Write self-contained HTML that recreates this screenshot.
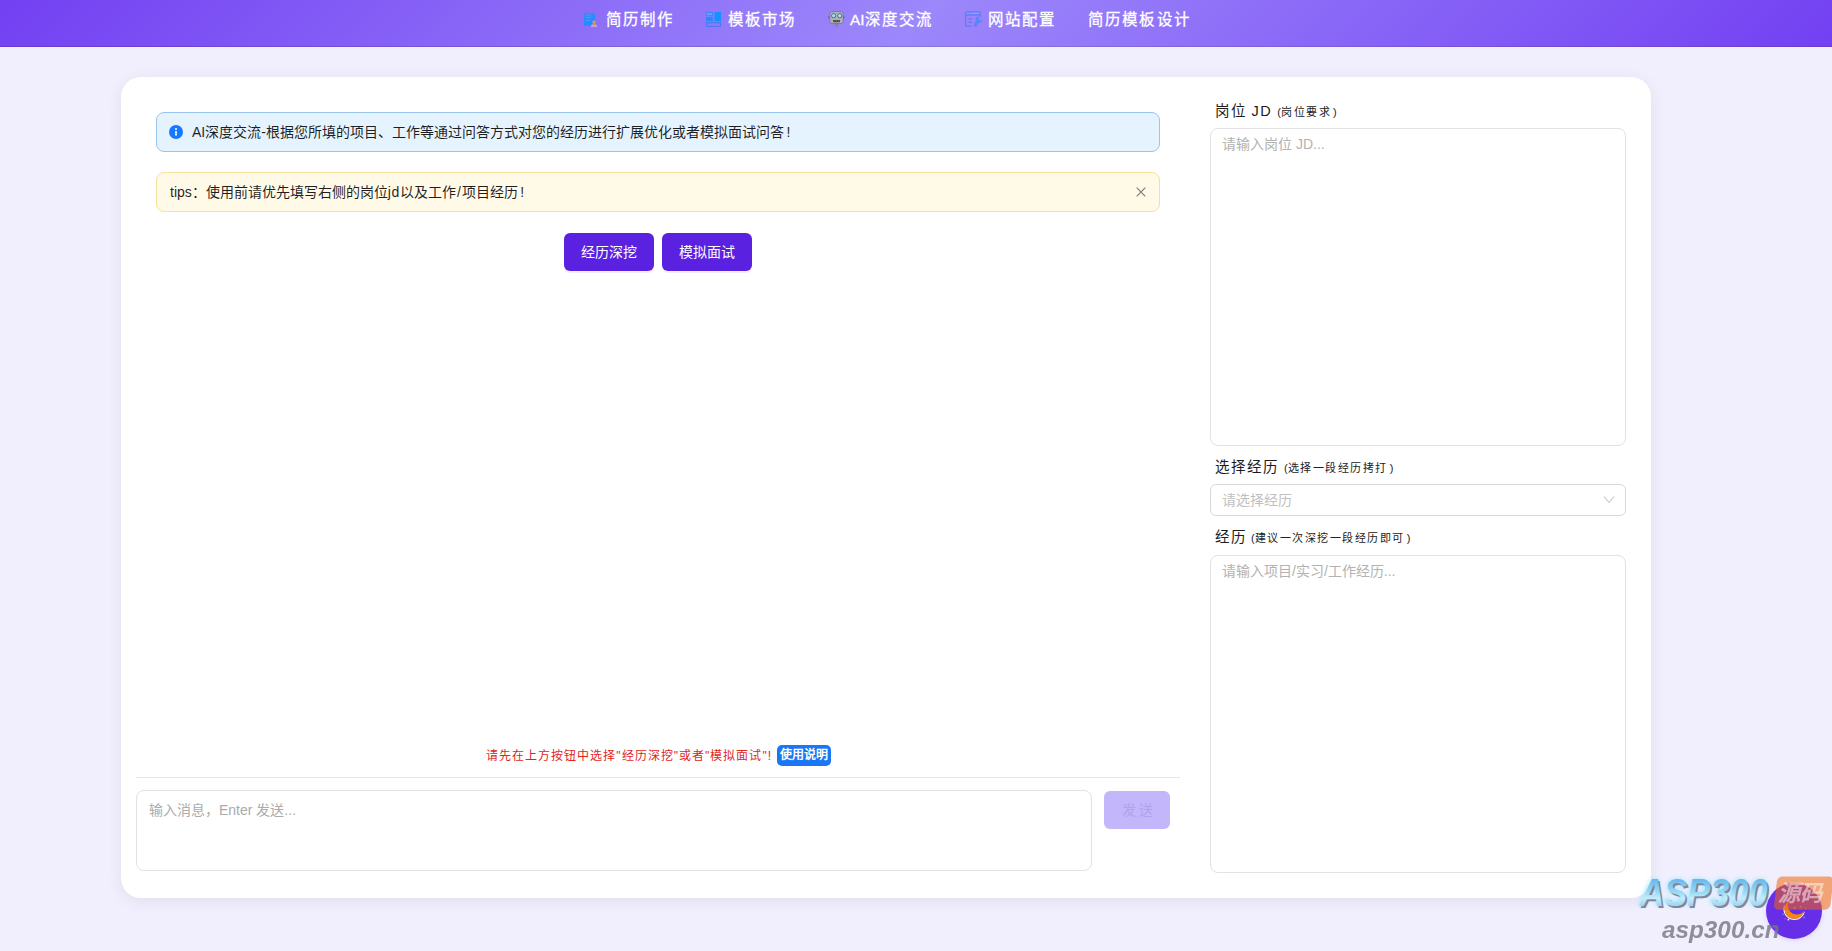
<!DOCTYPE html>
<html lang="zh-CN">
<head>
<meta charset="utf-8">
<title>AI深度交流</title>
<style>
*{box-sizing:border-box;margin:0;padding:0}
html,body{width:1832px;height:951px;overflow:hidden}
body{position:relative;background:#f1effd;font-family:"Liberation Sans",sans-serif;font-size:14px;color:rgba(0,0,0,.88)}
.abs{position:absolute}
/* header */
#hdr{position:absolute;left:0;top:0;width:1832px;height:47px;background:linear-gradient(135deg,#7340f2 0%,#9c87fb 50%,#7340f2 100%);border-bottom:1px solid rgba(0,0,0,.13)}
#hdrline{position:absolute;left:0;top:47px;width:1832px;height:1px;background:#fdeeff}
.nav{position:absolute;top:1px;height:38px;line-height:38px;font-size:15.4px;letter-spacing:2.3px;color:#fff;font-weight:500;white-space:nowrap;-webkit-text-stroke:.3px #fff}
.ico{position:absolute}
/* card */
#card{position:absolute;left:121px;top:77px;width:1530px;height:821px;background:#fff;border-radius:20px;box-shadow:0 3px 16px rgba(10,10,50,.07)}
.alert{position:absolute;left:156px;width:1004px;height:40px;border-radius:8px;line-height:38px;font-size:14px;white-space:nowrap}
#info{top:112px;background:#e4f3fe;border:1px solid #9ac5f0;padding-left:35px}
#warn{top:172px;background:#fffae8;border:1px solid #f7e19a;padding-left:13px}
.btn{position:absolute;top:233px;width:90px;height:38px;border-radius:6px;background:#5b21e0;color:#fff;font-size:14px;line-height:38px;text-align:center;font-weight:500;box-shadow:0 2px 0 rgba(91,33,224,.08)}
#hint{position:absolute;top:746px;left:486px;height:21px;line-height:21px;font-size:12px;letter-spacing:1.03px;color:#e0261c;white-space:nowrap}
#badge{position:absolute;left:777px;top:745px;width:54px;height:21px;border-radius:5px;background:#1a76f5;color:#fff;font-size:12px;font-weight:700;line-height:21px;text-align:center;white-space:nowrap}
#divider{position:absolute;left:136px;top:777px;width:1044px;height:1px;background:#e6e6e6}
.ta{position:absolute;border:1px solid #e2e2e2;border-radius:8px;background:#fff;color:#b2b2b2;font-size:14px;padding:4px 11px;line-height:22px;white-space:nowrap}
#send{position:absolute;left:1104px;top:791px;width:66px;height:38px;border-radius:6px;background:#c4b6fa;color:#b0a2ec;font-size:14px;line-height:38px;text-align:center;letter-spacing:3px;padding-left:3px}
.lbl{position:absolute;left:1215px;font-size:14.5px;letter-spacing:1.5px;color:#1c1c1c;white-space:nowrap;height:22px;line-height:22px}
.lbl small{font-size:11px;letter-spacing:1.5px;color:#222;margin-left:5px}.lbl small i{font-style:normal;margin-right:-1.2px}.lbl small b{font-weight:400;margin-left:1.8px}
#sel{position:absolute;left:1210px;top:484px;width:416px;height:32px;border:1px solid #d9d9d9;border-radius:6px;color:#bfbfbf;font-size:14px;line-height:30px;padding-left:11px}
</style>
</head>
<body>
<div id="hdr"></div><div id="hdrline"></div>
<div class="nav" style="left:605.5px">简历制作</div>
<div class="nav" style="left:727.5px">模板市场</div>
<div class="nav" style="left:850px"><span style="letter-spacing:0">AI</span>深度交流</div>
<div class="nav" style="left:987.5px">网站配置</div>
<div class="nav" style="left:1087.5px">简历模板设计</div>

<div id="card"></div>
<div class="alert" id="info">AI深度交流-根据您所填的项目、工作等通过问答方式对您的经历进行扩展优化或者模拟面试问答<span style="margin-left:2.5px">!</span></div>
<div class="alert" id="warn">tips：使用前请优先填写右侧的岗位<span style="letter-spacing:.6px">jd</span>以及工作<span style="margin:0 1.2px">/</span>项目经历<span style="margin-left:2px">!</span></div>
<div class="btn" style="left:564px">经历深挖</div>
<div class="btn" style="left:662px">模拟面试</div>

<div id="hint">请先在上方按钮中选择"经历深挖"或者"模拟面试"!</div>
<div id="badge">使用说明</div>
<div id="divider"></div>
<div class="ta" style="left:136px;top:790px;width:956px;height:81px;padding:8px 12px;color:#ababab">输入消息，Enter 发送...</div>
<div id="send">发送</div>

<div class="lbl" style="top:100px">岗位 JD<small><i>(</i>岗位要求<b>)</b></small></div>
<div class="ta" style="left:1210px;top:128px;width:416px;height:318px">请输入岗位 JD...</div>
<div class="lbl" style="top:456px"><span style="letter-spacing:2px">选择经历</span><small><i>(</i>选择一段经历拷打<b>)</b></small></div>
<div id="sel">请选择经历</div>
<div class="lbl" style="top:526px">经历<small><i>(</i>建议一次深挖一段经历即可<b>)</b></small></div>
<div class="ta" style="left:1210px;top:555px;width:416px;height:318px">请输入项目/实习/工作经历...</div>

<!-- nav icons -->
<svg class="ico" style="left:583px;top:11px" width="16" height="17" viewBox="0 0 16 17">
 <defs><linearGradient id="gd" x1="0" y1="0" x2="0" y2="1"><stop offset="0" stop-color="#4682f6"/><stop offset=".45" stop-color="#2a8cfb"/><stop offset="1" stop-color="#1b91ff"/></linearGradient></defs>
 <rect x="1" y="1.800" width="11.200" height="13" rx=".6" fill="url(#gd)"/>
 <rect x="3" y="3.400" width="5" height="1" fill="#5b94ff"/>
 <rect x="3" y="6.100" width="5" height="1" fill="#5b98ff"/>
 <rect x="3" y="9" width="3.400" height="1" fill="#4f9cff"/>
 <path d="M7.800 15.900c0-2 1.300-2.900 3.200-2.900s3.200.9 3.200 2.900z" fill="#cfa2d6" opacity=".9"/>
 <circle cx="11" cy="11.100" r="1.700" fill="#e0935f"/>
 <rect x="9.800" y="12.300" width="2.400" height="1.800" rx=".8" fill="#e2905a"/>
</svg>
<svg class="ico" style="left:705px;top:11px" width="17" height="17" viewBox="0 0 17 17">
 <rect x="1" y="1" width="15" height="9.600" fill="#6c8dff" opacity=".75"/>
 <rect x="1.500" y="1.500" width="6" height="3.200" fill="#6f9dff" stroke="#4a80f4" stroke-width="1"/>
 <rect x="1" y="6.100" width="6.900" height="4.100" fill="#2b88fb"/>
 <rect x="9.400" y="1" width="6.600" height="9.200" fill="#1890ff"/>
 <rect x="1.600" y="11.700" width="13.800" height="3.700" fill="none" stroke="#4a7af2" stroke-width="1.200"/>
</svg>
<svg class="ico" style="left:827px;top:10px" width="18" height="18" viewBox="0 0 18 18">
 <rect x="7.900" y="12.500" width="3" height="4.300" fill="#88888e"/>
 <rect x="1.200" y="6.300" width="1.600" height="2" fill="#6a55c8"/>
 <rect x="16" y="6.300" width="1.600" height="2" fill="#6a55c8"/>
 <rect x="2.800" y="1.600" width="13.400" height="12" rx="2.200" fill="#b1afb6" stroke="#7668bf" stroke-width=".8"/>
 <circle cx="6.600" cy="5.700" r="2.100" fill="#aadff0" stroke="#3f7686" stroke-width="1"/>
 <circle cx="12.700" cy="5.700" r="2.100" fill="#aadff0" stroke="#3f7686" stroke-width="1"/>
 <rect x="6.100" y="9.900" width="6.800" height="2.300" rx=".4" fill="#47474d"/>
 <path d="M7.800 10.300v1.500M9.500 10.300v1.500M11.200 10.300v1.500" stroke="#8a8a90" stroke-width=".5"/>
</svg>
<svg class="ico" style="left:964px;top:10px" width="19" height="18" viewBox="0 0 19 18">
 <path d="M7 16.200H3a1.400 1.400 0 0 1-1.400-1.400V3.200A1.400 1.400 0 0 1 3 1.800h11.800a1.400 1.400 0 0 1 1.400 1.400v3.600" fill="none" stroke="#6878ee" stroke-width="1.300"/>
 <rect x="2.200" y="2.400" width="13.400" height="1.700" fill="#7f8cfa" opacity=".7"/>
 <rect x="2.200" y="4.100" width="13.400" height="1.700" fill="#5f82fa"/>
 <rect x="3.300" y="2.900" width="1" height=".9" fill="#9aa6ff"/><rect x="5" y="2.900" width="1" height=".9" fill="#9aa6ff"/>
 <rect x="7.400" y="2.900" width="7" height=".9" fill="#9aa6ff"/>
 <rect x="4.300" y="8.300" width="3.800" height="1.300" fill="#6878ee"/>
 <rect x="4.300" y="11.700" width="3.800" height="1.300" fill="#6878ee"/>
 <path d="M11.300 15.200L14 11" stroke="#5a86fb" stroke-width="3.300" stroke-linecap="round" fill="none"/>
 <circle cx="14.800" cy="9.800" r="3.300" fill="#5f84f8"/>
 <path d="M14.700 10.300L15.300 6 19 9.300z" fill="#8d8bfc"/>
</svg>
<!-- alert icons -->
<svg class="ico" style="left:169px;top:125px" width="14" height="14" viewBox="0 0 14 14"><circle cx="7" cy="7" r="7" fill="#1677ff"/><rect x="6.200" y="6" width="1.600" height="4.600" fill="#fff"/><circle cx="7" cy="4" r="1" fill="#fff"/></svg>
<svg class="ico" style="left:1136px;top:187px" width="10" height="10" viewBox="0 0 10 10"><path d="M.7.700l8.600 8.600M9.300.700L.700 9.300" stroke="#777" stroke-width="1.100" fill="none"/></svg>
<svg class="ico" style="left:1603px;top:496px" width="12" height="8" viewBox="0 0 12 8"><path d="M1 .5l5 6L11 .5" stroke="#c6c6c6" stroke-width="1.100" fill="none"/></svg>

<!-- moon toggle -->
<div id="moon" style="position:absolute;left:1766px;top:883px;width:56px;height:56px;border-radius:50%;background:#672ee8;box-shadow:0 1px 5px rgba(90,50,220,.16)"></div>
<svg class="ico" style="left:1776px;top:892px" width="36" height="36" viewBox="0 0 36 36">
 <defs><mask id="mk"><rect width="36" height="36" fill="#fff"/><circle cx="20.900" cy="13.500" r="9.100" fill="#000"/></mask>
 <mask id="mk2"><rect width="36" height="36" fill="#fff"/><circle cx="19.800" cy="12.500" r="11.500" fill="#000"/></mask></defs>
 <circle cx="18.300" cy="17.200" r="10.300" fill="none" stroke="#fff" stroke-width="1.100" mask="url(#mk2)" opacity=".95"/>
 <circle cx="18.300" cy="17.200" r="9.900" fill="#f5870f" mask="url(#mk)"/>
 <circle cx="7.100" cy="22.300" r="1" fill="#4f7dff"/><circle cx="28.300" cy="25.500" r="1.100" fill="#4f7dff"/>
 <circle cx="12.400" cy="27.600" r=".9" fill="#fff"/><circle cx="9" cy="26.800" r=".8" fill="#c04fd0"/><circle cx="22.500" cy="27.200" r=".6" fill="#d070e0"/>
 <circle cx="18.500" cy="15.800" r=".9" fill="#f0a040"/><circle cx="24.500" cy="14.700" r="1" fill="#7fb060"/><circle cx="29.500" cy="16.200" r=".7" fill="#f08040"/>
 <circle cx="19.500" cy="8.300" r=".7" fill="#f0a040"/>
</svg>
<!-- watermark -->
<svg class="ico" style="left:1620px;top:866px" width="212" height="85" viewBox="0 0 212 85">
 <defs>
  <linearGradient id="g1" x1="0" y1="0" x2="0" y2="1"><stop offset="0" stop-color="#4fa4e2"/><stop offset=".5" stop-color="#9bdcf6"/><stop offset=".62" stop-color="#c4ecfb"/><stop offset="1" stop-color="#6cbdea"/></linearGradient>
  <filter id="glow" x="-10%" y="-30%" width="120%" height="160%"><feGaussianBlur stdDeviation="2.400"/></filter>
 </defs>
 <g transform="translate(157.500,10.500) skewX(-7)"><rect x="0" y="0" width="56.400" height="33.200" rx="5" fill="#f2640a" opacity=".54"/></g>
 <text x="157.500" y="35.300" font-family="Liberation Sans, sans-serif" font-weight="700" font-style="italic" font-size="22.500" fill="#fff" opacity=".5" textLength="45.500" lengthAdjust="spacingAndGlyphs">源码</text>
 <g font-family="Liberation Sans, sans-serif" font-weight="700" font-style="italic" font-size="38">
  <text x="19" y="40" fill="#8fe4ff" filter="url(#glow)" textLength="128" lengthAdjust="spacingAndGlyphs">ASP300</text>
  <text x="21.300" y="42" fill="#85859a" textLength="128" lengthAdjust="spacingAndGlyphs">ASP300</text>
  <text x="19.500" y="40" fill="url(#g1)" textLength="128" lengthAdjust="spacingAndGlyphs">ASP300</text>
 </g>
 <text x="42" y="71.800" font-family="Liberation Sans, sans-serif" font-weight="700" font-style="italic" font-size="24.500" fill="#77777f" opacity=".8" textLength="117.500" lengthAdjust="spacingAndGlyphs">asp300.cn</text>
</svg>
</body>
</html>
